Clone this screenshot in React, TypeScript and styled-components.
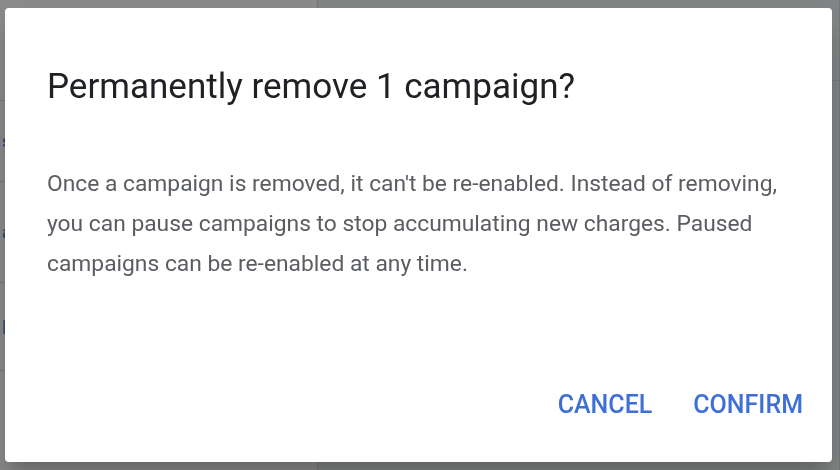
import React from 'react';
import styled, { createGlobalStyle } from 'styled-components';

const GlobalStyle = createGlobalStyle`
  html, body {
    margin: 0;
    padding: 0;
    width: 840px;
    height: 470px;
    overflow: hidden;
    font-family: Roboto, "Noto Sans", Arial, sans-serif;
  }
`;

const Page = styled.div`
  width: 840px;
  height: 470px;
  display: grid;
  grid-template-columns: 318px 1fr;
  background: #ffffff;
`;

const Column = styled.div<{ $tint: string }>`
  display: flex;
  flex-direction: column;
  background: ${(p) => p.$tint};
  border-right: 1px solid #dadce0;
`;

const Row = styled.div<{ $h: number }>`
  height: ${(p) => p.$h}px;
  border-bottom: 1px solid #dadce0;
  display: flex;
  align-items: center;
  padding-left: 2px;
  font-size: 16px;
  color: #1a73e8;
`;

const Scrim = styled.div`
  position: fixed;
  inset: 0;
  background: rgba(0, 0, 0, 0.46);
  display: flex;
  padding: 8px 8px 8px 5px;
  box-sizing: border-box;
`;

const Dialog = styled.div`
  flex: 1;
  background: #ffffff;
  border-radius: 4px;
  box-shadow: 0 11px 15px -7px rgba(0, 0, 0, 0.2), 0 24px 38px 3px rgba(0, 0, 0, 0.14);
  display: flex;
  flex-direction: column;
  padding: 57px 29px 37px 42px;
  box-sizing: border-box;
`;

const Title = styled.h2`
  margin: 0;
  font-size: 35px;
  line-height: 44px;
  font-weight: 400;
  color: #202124;
`;

const Body = styled.p`
  margin: 55px 0 0;
  font-size: 22.8px;
  line-height: 40px;
  font-weight: 400;
  color: #5a5d61;
  max-width: 750px;
`;

const Actions = styled.div`
  margin-top: auto;
  display: flex;
  justify-content: flex-end;
  gap: 41px;
`;

const TextButton = styled.button`
  border: none;
  background: none;
  padding: 0;
  font-family: Roboto, Arial, sans-serif;
  font-size: 25px;
  font-weight: 500;
  line-height: 40px;
  color: #3d6fd6;
  text-transform: uppercase;
  cursor: pointer;
`;

export default function App() {
  return (
    <>
      <GlobalStyle />
      <Page>
        <Column $tint="#ffffff">
          <Row $h={100} />
          <Row $h={80}>s</Row>
          <Row $h={100}>a</Row>
          <Row $h={87}>|</Row>
          <Row $h={103} />
        </Column>
        <Column $tint="#f1f3f4">
          <Row $h={80} />
        </Column>
      </Page>
      <Scrim>
        <Dialog role="dialog" aria-modal="true">
          <Title>Permanently remove 1 campaign?</Title>
          <Body>
            Once a campaign is removed, it can't be re-enabled. Instead of removing, you can
            pause campaigns to stop accumulating new charges. Paused campaigns can be
            re-enabled at any time.
          </Body>
          <Actions>
            <TextButton>Cancel</TextButton>
            <TextButton>Confirm</TextButton>
          </Actions>
        </Dialog>
      </Scrim>
    </>
  );
}
